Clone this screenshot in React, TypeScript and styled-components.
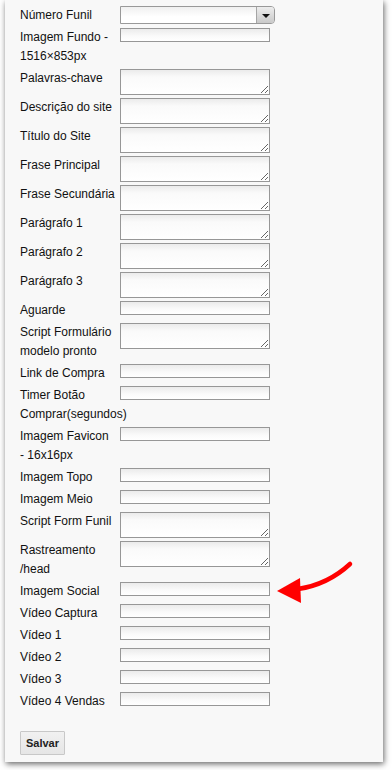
import React from "react";
import styled, { createGlobalStyle } from "styled-components";

type Field = { label: string; kind: "input" | "textarea" };

const fields: Field[] = [
  { label: "Imagem Fundo - 1516×853px", kind: "input" },
  { label: "Palavras-chave", kind: "textarea" },
  { label: "Descrição do site", kind: "textarea" },
  { label: "Título do Site", kind: "textarea" },
  { label: "Frase Principal", kind: "textarea" },
  { label: "Frase Secundária", kind: "textarea" },
  { label: "Parágrafo 1", kind: "textarea" },
  { label: "Parágrafo 2", kind: "textarea" },
  { label: "Parágrafo 3", kind: "textarea" },
  { label: "Aguarde", kind: "input" },
  { label: "Script Formulário modelo pronto", kind: "textarea" },
  { label: "Link de Compra", kind: "input" },
  { label: "Timer Botão Comprar(segundos)", kind: "input" },
  { label: "Imagem Favicon - 16x16px", kind: "input" },
  { label: "Imagem Topo", kind: "input" },
  { label: "Imagem Meio", kind: "input" },
  { label: "Script Form Funil", kind: "textarea" },
  { label: "Rastreamento /head", kind: "textarea" },
  { label: "Imagem Social", kind: "input" },
  { label: "Vídeo Captura", kind: "input" },
  { label: "Vídeo 1", kind: "input" },
  { label: "Vídeo 2", kind: "input" },
  { label: "Vídeo 3", kind: "input" },
  { label: "Vídeo 4 Vendas", kind: "input" },
];

const App = () => {
  return (
    <>
      <GlobalStyle />
      <Page>
        <Panel>
          <Row>
            <Label>Número Funil</Label>
            <SelectBox>
              <SelectField />
              <SelectButton>
                <Caret />
              </SelectButton>
            </SelectBox>
          </Row>
          {fields.map(f => (
            <Row key={f.label}>
              <Label>{f.label}</Label>
              {f.kind === "input" ? <TextInput type="text" /> : <TextArea />}
            </Row>
          ))}
          <SaveButton type="button">Salvar</SaveButton>
        </Panel>
        <Arrow width="90" height="55" viewBox="0 0 90 55">
          <path d="M28 34 C48 31 66 22 80 9" fill="none" stroke="#f00" strokeWidth="4.5" strokeLinecap="round" />
          <polygon points="7,36 30,23 31,48" fill="#f00" />
        </Arrow>
      </Page>
    </>
  );
};

const GlobalStyle = createGlobalStyle`
  body {
    margin: 0;
    background: #fff;
    font-family: "Liberation Sans", Arial, sans-serif;
  }
`;

const Page = styled.div`
  position: relative;
  width: 392px;
  height: 770px;
  padding-left: 5px;
  box-sizing: border-box;
  overflow: hidden;
`;

const Panel = styled.form`
  width: 378px;
  height: 762px;
  box-sizing: border-box;
  padding: 5px 15px 7px;
  background: #f8f8f8;
  box-shadow: 1px 2px 6px rgba(0, 0, 0, 0.6);
  display: flex;
  flex-direction: column;
  align-items: flex-start;
`;

const Row = styled.div`
  display: flex;
  align-items: flex-start;
  gap: 5px;
  padding: 1px 0 2px;
`;

const Label = styled.label`
  flex: 0 0 95px;
  min-width: 0;
  font-size: 12px;
  line-height: 19px;
  color: #111;
`;

const fieldLook = `
  box-sizing: border-box;
  width: 150px;
  margin: 0;
  padding: 1px 3px;
  border: 1px solid #979797;
  border-radius: 0;
  background: linear-gradient(to bottom, #ebebeb 0, #fafafa 7px, #fff 100%);
  font-family: "Liberation Sans", Arial, sans-serif;
  font-size: 11px;
  outline: none;
`;

const TextInput = styled.input`
  ${fieldLook}
  height: 14px;
  padding: 0 3px;
`;

const TextArea = styled.textarea`
  ${fieldLook}
  height: 26px;
  display: block;
`;

const SelectBox = styled.div`
  display: flex;
  box-sizing: border-box;
  width: 155px;
  height: 18px;
  border: 1px solid #999;
  border-radius: 0 4px 4px 0;
  overflow: hidden;
`;

const SelectField = styled.div`
  flex: 1;
  background: linear-gradient(to bottom, #f0f0f0, #fff 60%);
`;

const SelectButton = styled.div`
  width: 17px;
  border-left: 1px solid #a5a5a5;
  background: linear-gradient(to bottom, #ededed, #c9c9c9);
  display: flex;
  align-items: center;
  justify-content: center;
`;

const Caret = styled.span`
  width: 0;
  height: 0;
  border-left: 4px solid transparent;
  border-right: 4px solid transparent;
  border-top: 4px solid #111;
  margin-top: 1px;
`;

const SaveButton = styled.button`
  margin-top: 18px;
  width: 45px;
  height: 24px;
  padding: 0;
  border: 1px solid #c8c8c8;
  border-radius: 1px;
  background: linear-gradient(to bottom, #f1f1f1, #e6e6e6);
  font-family: "Liberation Sans", Arial, sans-serif;
  font-size: 11px;
  font-weight: bold;
  color: #222;
`;

const Arrow = styled.svg`
  position: absolute;
  left: 270px;
  top: 555px;
`;

export default App;
